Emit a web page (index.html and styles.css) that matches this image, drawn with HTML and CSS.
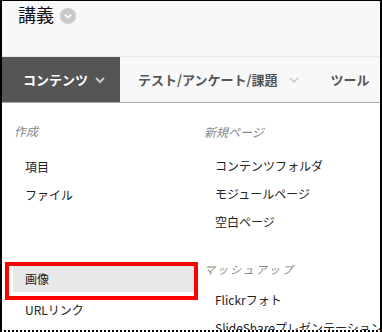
FILE: index.html
```html
<!DOCTYPE html>
<html lang="ja">
<head>
  <meta charset="UTF-8" />
  <title>講義 – コンテンツ</title>
  <link rel="stylesheet" href="styles.css">
</head>
<body>
  <div class="frame">
    <header class="course-header">
      <h1>講義</h1>
      <span class="course-toggle">
        <svg width="16" height="16" viewBox="0 0 16 16"><circle cx="8" cy="8" r="8" fill="#c9c9c9"/><path d="M4.8 6.6 L8 9.6 L11.2 6.6" fill="none" stroke="#fff" stroke-width="1.8"/></svg>
      </span>
    </header>
    <nav class="tabs">
      <a class="tab active">コンテンツ <svg class="chev" width="10" height="8" viewBox="0 0 10 8"><path d="M1 2 L5 6 L9 2" fill="none" stroke="#c8c8c8" stroke-width="2"/></svg></a>
      <a class="tab wide">テスト/アンケート/課題 <svg class="chev" width="10" height="8" viewBox="0 0 10 8"><path d="M1 2 L5 6 L9 2" fill="none" stroke="#c4c4c4" stroke-width="1.4"/></svg></a>
      <a class="tab">ツール</a>
    </nav>
    <div class="menu">
      <div class="col col-left">
        <div class="menu-heading">作成</div>
        <ul>
          <li>項目</li>
          <li>ファイル</li>
          <li class="blank"></li>
          <li class="blank"></li>
          <li class="picked"><span>画像</span></li>
          <li>URLリンク</li>
        </ul>
      </div>
      <div class="col col-right">
        <div class="menu-heading">新規ページ</div>
        <ul>
          <li>コンテンツフォルダ</li>
          <li>モジュールページ</li>
          <li>空白ページ</li>
        </ul>
        <div class="menu-heading mashup">マッシュアップ</div>
        <ul>
          <li>Flickrフォト</li>
          <li>SlideShareプレゼンテーション</li>
        </ul>
      </div>
    </div>
  </div>
</body>
</html>
```

FILE: styles.css
```css
body {
  margin: 0;
  font-family: "Noto Sans CJK JP", "Noto Sans", sans-serif;
  background: #fff;
}
.frame {
  width: 382px;
  height: 332px;
  box-sizing: border-box;
  border-top: 1px solid #000;
  border-left: 2px solid #000;
  border-right: 2px solid #000;
  border-bottom: 2px dotted #000;
  overflow: hidden;
}
.course-header {
  height: 55px;
  background: #f8f8f8;
  border-bottom: 1px solid #e8e8e8;
  display: flex;
  align-items: flex-start;
  padding-left: 16px;
}
.course-header h1 {
  margin: 0;
  font-size: 18px;
  font-weight: normal;
  line-height: 27px;
  color: #111;
}
.course-toggle {
  margin: 7px 0 0 6px;
  display: flex;
}
.tabs {
  display: flex;
  height: 45px;
  background: #f8f8f8;
  border-bottom: 1px solid #a8a8a8;
  white-space: nowrap;
}
.tab {
  display: flex;
  flex-shrink: 0;
  align-items: center;
  gap: 7px;
  padding: 0 18px;
  font-size: 13px;
  font-weight: bold;
  color: #555;
}
.tab.active {
  background: #555;
  color: #fff;
  padding: 0 15px 0 21px;
}
.tab.wide {
  gap: 11px;
  padding-right: 16px;
}
.tab:last-child {
  padding-left: 16px;
}
.menu {
  display: flex;
  padding-top: 16px;
}
.col-left {
  width: 196px;
  flex-shrink: 0;
}
.col-right {
  flex: 1;
  white-space: nowrap;
}
.menu-heading {
  height: 24px;
  line-height: 24px;
  margin-bottom: 10px;
  font-size: 12px;
  font-style: italic;
  color: #888;
  padding-left: 12px;
}
.col-right .menu-heading {
  padding-left: 6px;
  margin-top: 1px;
  margin-bottom: 8px;
}
.col-right .menu-heading.mashup {
  margin-top: 21px;
  margin-bottom: 5px;
  font-size: 11px;
  letter-spacing: 2px;
}
ul {
  list-style: none;
  margin: 0;
  padding: 0;
}
li {
  height: 28px;
  line-height: 28px;
  font-size: 12px;
  color: #222;
  padding-left: 23px;
}
.col-right li {
  padding-left: 17px;
}
li.picked {
  height: 30px;
  padding-left: 0;
  margin: -3px 4px 0 7px;
  outline: 4px solid #f00;
  background: #fff;
}
li.picked span {
  display: block;
  margin: 4px 0 0 4px;
  height: 26px;
  line-height: 26px;
  background: #e8e8e8;
  padding-left: 12px;
}
```
